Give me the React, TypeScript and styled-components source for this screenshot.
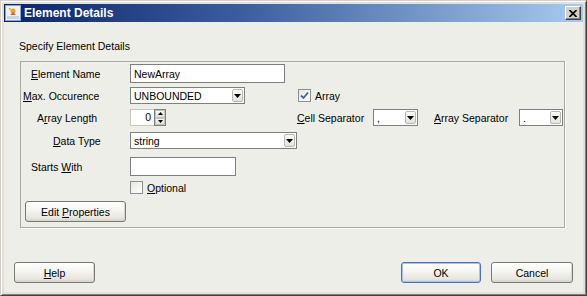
import styled, { createGlobalStyle } from "styled-components";

const GlobalStyle = createGlobalStyle`
  html, body {
    margin: 0;
    padding: 0;
  }
  body {
    background: #404040;
    font-family: "Liberation Sans", Arial, sans-serif;
    font-size: 10.5px;
    color: #000;
  }
`;

const Window = styled.div`
  width: 587px;
  height: 296px;
  box-sizing: border-box;
  border: 1px solid;
  border-color: #d4d0c8 #404040 #404040 #d4d0c8;
  box-shadow: inset 1px 1px 0 #fff, inset -1px -1px 0 #808080;
  padding: 3px;
  background: #e2e0d8;
  display: flex;
  flex-direction: column;
`;

const TitleBar = styled.div`
  height: 18px;
  flex: none;
  display: flex;
  align-items: center;
  padding: 0 2px 0 1px;
  background: linear-gradient(to right, #0a246a 0%, #3a5c9c 40%, #a6caf0 100%);
`;

const TitleText = styled.span`
  flex: 1;
  margin-left: 3px;
  color: #fff;
  font-weight: bold;
  font-size: 12px;
`;

const CloseButton = styled.div`
  width: 16px;
  height: 14px;
  box-sizing: border-box;
  background: #d4d0c8;
  border: 1px solid;
  border-color: #fff #404040 #404040 #fff;
  box-shadow: inset -1px -1px 0 #808080;
  display: flex;
  align-items: center;
  justify-content: center;
`;

const Body = styled.div`
  flex: 1;
  background: #eeeee8;
  display: flex;
  flex-direction: column;
  padding: 18px 0 9px 0;
`;

const Heading = styled.div`
  line-height: 13px;
  margin-left: 15px;
`;

const Group = styled.div`
  margin: 8px 18px 0 16px;
  border: 1px solid #a9a9a2;
  box-shadow: 1px 1px 0 #fff;
  padding-bottom: 5px;
`;

const Row = styled.div<{ $h: number }>`
  display: flex;
  align-items: center;
  height: ${(p) => p.$h}px;
`;

const Label = styled.div<{ $indent?: number }>`
  width: 109px;
  flex: none;
  box-sizing: border-box;
  padding-left: ${(p) => p.$indent ?? 0}px;
  white-space: nowrap;
`;

const SideLabel = styled.div<{ $w: number }>`
  width: ${(p) => p.$w}px;
  flex: none;
  white-space: nowrap;
`;

const Cell = styled.div<{ $w: number }>`
  width: ${(p) => p.$w}px;
  flex: none;
  display: flex;
  align-items: center;
`;

const Mn = styled.span`
  text-decoration: underline;
`;

const TextField = styled.div<{ $w: number }>`
  width: ${(p) => p.$w}px;
  height: 19px;
  box-sizing: border-box;
  border: 1px solid #7f7f7f;
  background: #fff;
  padding-left: 3px;
  display: flex;
  align-items: center;
`;

const Combo = styled.div<{ $w: number; $gap?: number }>`
  width: ${(p) => p.$w}px;
  height: 17px;
  flex: none;
  box-sizing: border-box;
  border: 1px solid #7f7f7f;
  background: #fff;
  display: flex;
  align-items: center;
  padding: 1px;
  margin-right: ${(p) => p.$gap ?? 0}px;
`;

const ComboValue = styled.span`
  flex: 1;
  padding-left: 2px;
  white-space: nowrap;
`;

const DropButton = styled.div`
  width: 11px;
  height: 13px;
  box-sizing: border-box;
  border: 1px solid #b9b8b0;
  border-radius: 2px;
  background: linear-gradient(#fafaf8, #e4e3dc);
  display: flex;
  align-items: center;
  justify-content: center;
`;

const Spinner = styled.div`
  display: flex;
  height: 17px;
`;

const SpinField = styled.div`
  width: 24px;
  box-sizing: border-box;
  border: 1px solid #c8c8c0;
  border-right: none;
  background: #fff;
  text-align: right;
  padding-right: 3px;
  line-height: 15px;
`;

const SpinArrows = styled.div`
  width: 10px;
  display: flex;
  flex-direction: column;
  border: 1px solid #7f7f7f;
  background: #fff;
`;

const SpinButton = styled.div`
  flex: 1;
  display: flex;
  align-items: center;
  justify-content: center;
  background: linear-gradient(#fafaf8, #e0dfd8);
  border: 1px solid #c4c3bb;
`;

const CheckBox = styled.div`
  width: 13px;
  height: 13px;
  flex: none;
  box-sizing: border-box;
  border: 1px solid #8e8f8f;
  background: linear-gradient(135deg, #e6e6e0, #ffffff);
  display: flex;
  align-items: center;
  justify-content: center;
`;

const CheckText = styled.span`
  margin-left: 4px;
`;

const ButtonRow = styled.div`
  display: flex;
  margin-top: 7px;
  padding-left: 4px;
`;

const Button = styled.button<{ $w: number; $default?: boolean }>`
  width: ${(p) => p.$w}px;
  height: 21px;
  box-sizing: border-box;
  padding: 0;
  font-family: inherit;
  font-size: 10.5px;
  color: #000;
  border: 1px solid ${(p) => (p.$default ? "#4a6ec0" : "#7a7a72")};
  border-radius: 3px;
  background: linear-gradient(#ffffff, #f4f4f0 45%, #e6e5de 85%, #d2d0c8);
  box-shadow: ${(p) =>
    p.$default ? "inset 0 0 0 1px #a9c1ee" : "inset -1px -1px 0 #d8d6cc"};
`;

const Footer = styled.div`
  margin-top: auto;
  display: flex;
  align-items: center;
  padding: 0 10px;
  gap: 10px;
`;

const Spacer = styled.div`
  flex: 1;
`;

const Arrow = () => (
  <svg width="7" height="4" viewBox="0 0 7 4">
    <polygon points="0,0 7,0 3.5,4" fill="#000" />
  </svg>
);

const SmallArrow = ({ up }: { up?: boolean }) => (
  <svg width="5" height="3" viewBox="0 0 5 3">
    <polygon points={up ? "0,3 5,3 2.5,0" : "0,0 5,0 2.5,3"} fill="#000" />
  </svg>
);

const Check = () => (
  <svg width="9" height="9" viewBox="0 0 9 9">
    <path d="M1 4.5 L3.5 7 L8 1.5" stroke="#3d62b3" strokeWidth="1.8" fill="none" />
  </svg>
);

const AppIcon = () => (
  <svg width="16" height="16" viewBox="0 0 16 16">
    <rect x="0.5" y="0.5" width="15" height="15" fill="#eef1f8" stroke="#8aa4d6" />
    <rect x="2" y="11" width="12" height="3" fill="#c9d4ec" />
    <circle cx="8" cy="6" r="2.5" fill="#f0a030" />
    <path d="M5 10 L8 7 L11 10 Z" fill="#d8602a" />
    <rect x="4" y="3" width="2" height="2" fill="#e8c040" />
  </svg>
);

const CloseIcon = () => (
  <svg width="8" height="7" viewBox="0 0 8 7">
    <path d="M0.5 0 L7.5 7 M7.5 0 L0.5 7" stroke="#000" strokeWidth="1.6" />
  </svg>
);

function App() {
  return (
    <>
      <GlobalStyle />
      <Window>
        <TitleBar>
          <AppIcon />
          <TitleText>Element Details</TitleText>
          <CloseButton>
            <CloseIcon />
          </CloseButton>
        </TitleBar>
        <Body>
          <Heading>Specify Element Details</Heading>
          <Group>
            <Row $h={23}>
              <Label $indent={10}>
                <Mn>E</Mn>lement Name
              </Label>
              <TextField $w={155}>NewArray</TextField>
            </Row>
            <Row $h={21}>
              <Label $indent={2}>
                <Mn>M</Mn>ax. Occurence
              </Label>
              <Cell $w={168}>
                <Combo $w={115}>
                  <ComboValue>UNBOUNDED</ComboValue>
                  <DropButton>
                    <Arrow />
                  </DropButton>
                </Combo>
              </Cell>
              <CheckBox>
                <Check />
              </CheckBox>
              <CheckText>Array</CheckText>
            </Row>
            <Row $h={23}>
              <Label $indent={16}>
                A<Mn>r</Mn>ray Length
              </Label>
              <Cell $w={167}>
                <Spinner>
                  <SpinField>0</SpinField>
                  <SpinArrows>
                    <SpinButton>
                      <SmallArrow up />
                    </SpinButton>
                    <SpinButton>
                      <SmallArrow />
                    </SpinButton>
                  </SpinArrows>
                </Spinner>
              </Cell>
              <SideLabel $w={76}>
                <Mn>C</Mn>ell Separator
              </SideLabel>
              <Combo $w={45} $gap={16}>
                <ComboValue>,</ComboValue>
                <DropButton>
                  <Arrow />
                </DropButton>
              </Combo>
              <SideLabel $w={85}>
                <Mn>A</Mn>rray Separator
              </SideLabel>
              <Combo $w={44}>
                <ComboValue>.</ComboValue>
                <DropButton>
                  <Arrow />
                </DropButton>
              </Combo>
            </Row>
            <Row $h={23}>
              <Label $indent={32}>
                <Mn>D</Mn>ata Type
              </Label>
              <Combo $w={167}>
                <ComboValue>string</ComboValue>
                <DropButton>
                  <Arrow />
                </DropButton>
              </Combo>
            </Row>
            <Row $h={29}>
              <Label $indent={10}>
                Starts <Mn>W</Mn>ith
              </Label>
              <TextField $w={106} />
            </Row>
            <Row $h={13}>
              <Label />
              <CheckBox />
              <CheckText>
                <Mn>O</Mn>ptional
              </CheckText>
            </Row>
            <ButtonRow>
              <Button $w={101}>
                Edit <Mn>P</Mn>roperties
              </Button>
            </ButtonRow>
          </Group>
          <Footer>
            <Button $w={81}>
              <Mn>H</Mn>elp
            </Button>
            <Spacer />
            <Button $w={80} $default>
              OK
            </Button>
            <Button $w={82}>Cancel</Button>
          </Footer>
        </Body>
      </Window>
    </>
  );
}

export default App;
